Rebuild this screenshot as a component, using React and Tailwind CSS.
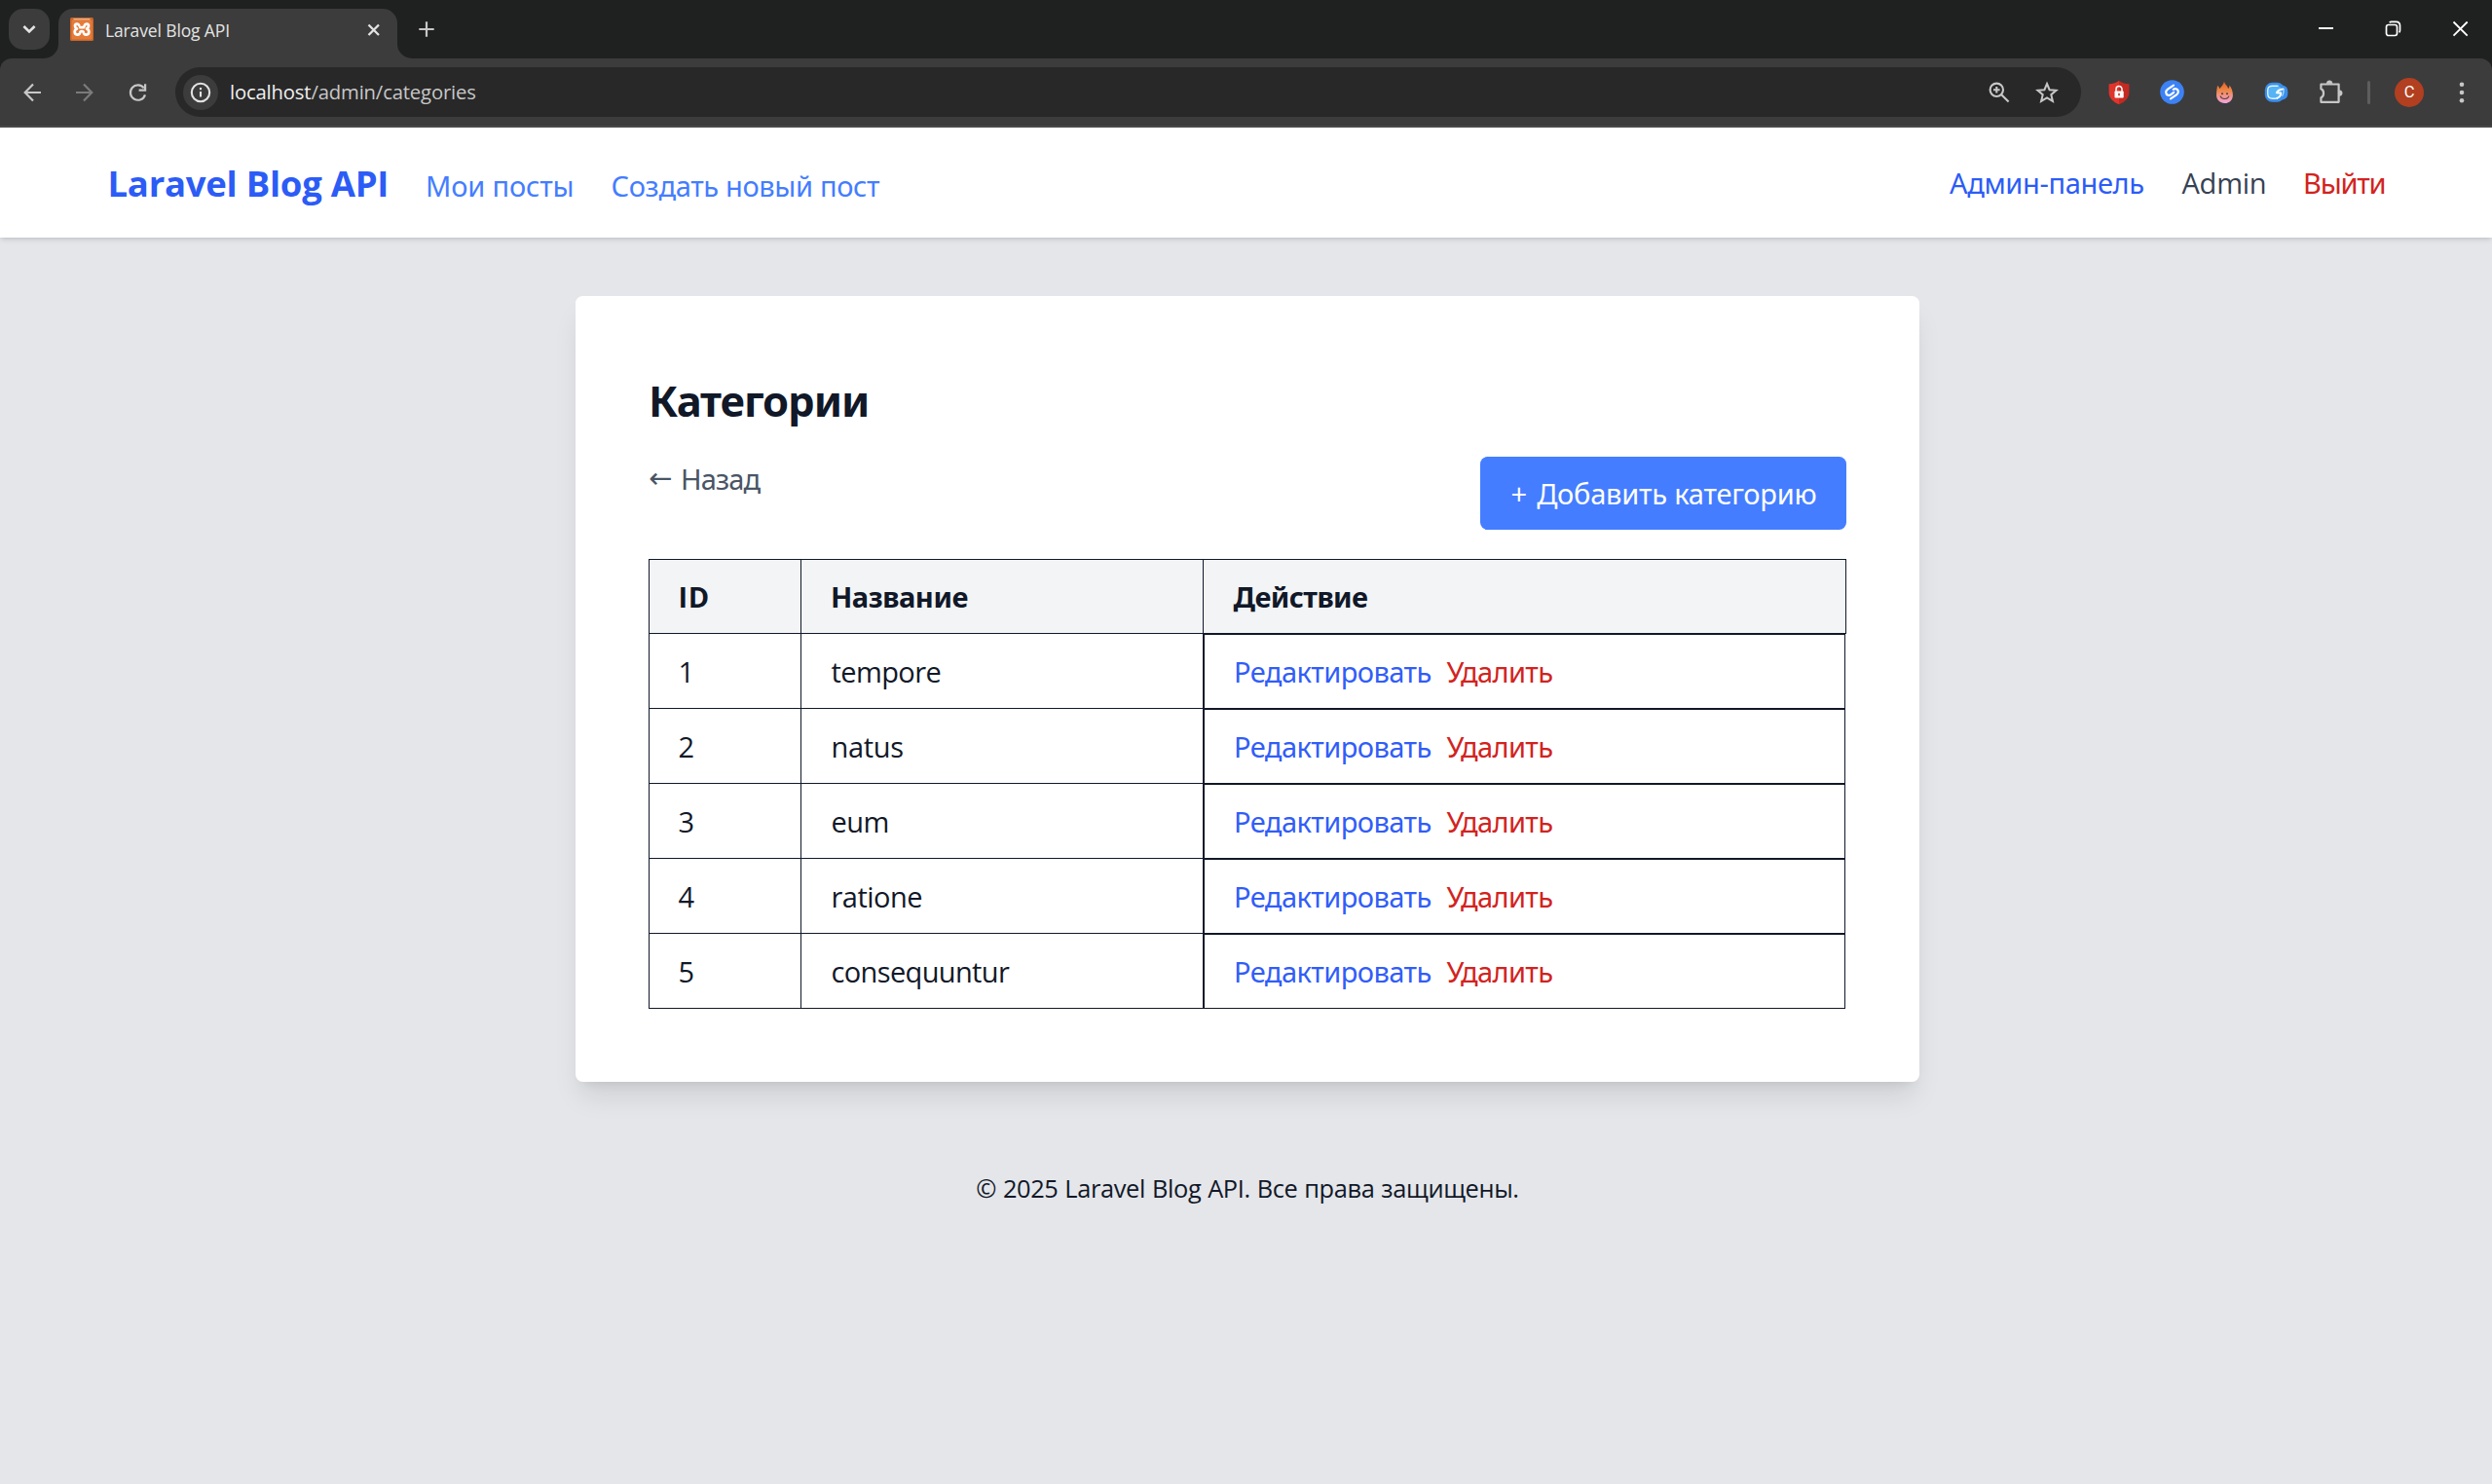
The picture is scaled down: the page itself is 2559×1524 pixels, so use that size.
import React from 'react';

const LATIN = "font-['Open_Sans','Noto_Sans',sans-serif]";
const CYR = "font-['Noto_Sans','Open_Sans',sans-serif]";

const rows = [
  { id: 1, name: 'tempore', track: 'tracking-[-0.6px]' },
  { id: 2, name: 'natus', track: 'tracking-[-0.3px]' },
  { id: 3, name: 'eum', track: 'tracking-[-0.5px]' },
  { id: 4, name: 'ratione', track: 'tracking-[-0.5px]' },
  { id: 5, name: 'consequuntur', track: 'tracking-[-0.64px]' },
];

function Favicon() {
  return (
    <svg width="24" height="24" viewBox="0 0 24 24">
      <rect width="24" height="24" rx="1.5" fill="#c9662a" />
      <rect x="1.5" y="2.5" width="21" height="20" rx="1" fill="#e57b38" />
      <path d="M3.5 1.8h17" stroke="#f5c3a2" strokeWidth="1.2" />
      <path
        d="M9.2 8.2c-.6-2.4-4.2-2-4.2.6 0 1.600 1 2.300 2 2.700-1.300.6-2.300 1.700-2.300 3.200 0 3.600 5 3.900 5.500.7.1-.9.800-1.300 1.800-1.300s1.700.4 1.800 1.300c.5 3.200 5.500 2.900 5.500-.7 0-1.500-1-2.600-2.300-3.200 1-.4 2-1.100 2-2.700 0-2.600-3.600-3-4.200-.6-.2.900-.5 1.500-.9 2h-3.700"
        fill="none" stroke="#fff" strokeWidth="2.700" strokeLinecap="round" strokeLinejoin="round"
      />
    </svg>
  );
}

function TabStrip() {
  return (
    <div className="relative flex h-[60px] items-start bg-[#1f2120]">
      <div className="mt-[9px] ml-[9px] flex h-[42px] w-[42px] items-center justify-center rounded-[15px] bg-[#3c3c3c]">
        <svg width="14" height="10" viewBox="0 0 14 10" fill="none" stroke="#e3e3e3" strokeWidth="2.600"><path d="M1.400 2 7 7.500 12.600 2" /></svg>
      </div>
      <div className="relative mt-[9px] ml-[9px] flex h-[51px] w-[348px] rounded-t-[15px] bg-[#3c3c3c]">
        <svg className="absolute bottom-0 -left-[15px]" width="15" height="15" viewBox="0 0 15 15"><path d="M15 0v15H0A15 15 0 0 0 15 0Z" fill="#3c3c3c" /></svg>
        <svg className="absolute -right-[15px] bottom-0" width="15" height="15" viewBox="0 0 15 15"><path d="M0 0v15h15A15 15 0 0 1 0 0Z" fill="#3c3c3c" /></svg>
        <div className="mt-[9px] ml-[12px] h-6 w-6"><Favicon /></div>
        <span className={`mt-[10px] ml-[12px] w-[269px] text-[17.500px] leading-6 tracking-[-0.13px] text-[#e3e3e3] ${LATIN}`}>Laravel Blog API</span>
        <svg className="mt-[14.500px]" width="14" height="14" viewBox="0 0 14 14" stroke="#e3e3e3" strokeWidth="2.300"><path d="m1.500 1.500 10.500 10.500M12 1.500 1.500 12" /></svg>
      </div>
      <svg className="mt-[22px] ml-[22px]" width="16" height="16" viewBox="0 0 16 16" stroke="#c7c7c7" strokeWidth="2.200"><path d="M8 .3v15.400M.3 8h15.400" /></svg>
      <div className="mr-[24px] ml-auto flex gap-[52px] pt-[21px] text-white">
        <svg width="17" height="17" viewBox="0 0 17 17" stroke="currentColor" strokeWidth="1.900"><path d="M1 8h15" /></svg>
        <svg width="17" height="17" viewBox="0 0 17 17" fill="none" stroke="currentColor" strokeWidth="1.700"><rect x="1.500" y="4.500" width="11" height="11" rx="2.200" /><path d="M4.700 2.200c.5-.6 1.100-.9 2-.9h4.800c2.300 0 4 1.700 4 4v5c0 .9-.3 1.500-.9 2" /></svg>
        <svg width="17" height="17" viewBox="0 0 17 17" fill="none" stroke="currentColor" strokeWidth="1.800"><path d="m1.500 1.500 14.200 14.200M15.700 1.500 1.500 15.700" /></svg>
      </div>
    </div>
  );
}

function Toolbar() {
  return (
    <div className="bg-[#1f2120]">
      <div className="flex h-[71px] items-center rounded-t-[12px] border-b-2 border-[#4a4a4a] bg-[#3c3c3c]">
        <svg className="ml-[24px]" width="18" height="20" viewBox="0 0 18 20" fill="none" stroke="#c7c7c7" strokeWidth="2.200"><path d="M18 10H2M10 1.600 1.700 10l8.300 8.400" /></svg>
        <svg className="ml-[36px]" width="18" height="20" viewBox="0 0 18 20" fill="none" stroke="#7b7b7b" strokeWidth="2.200"><path d="M0 10h16M8 1.600 16.300 10 8 18.400" /></svg>
        <svg className="ml-[36px]" width="19" height="20" viewBox="0 0 19 20" fill="none" stroke="#c7c7c7" strokeWidth="2.200"><path d="M17 12.300A7.700 7.700 0 1 1 15.800 5.400" /><path d="M17.100 1.200v6.500h-6.500" /></svg>
        <div className="ml-[29px] flex h-[51px] w-[1957px] items-center rounded-full bg-[#282828]">
          <div className="ml-[8px] flex h-9 w-9 items-center justify-center rounded-full bg-[#3c3c3c]">
            <svg width="22" height="22" viewBox="0 0 22 22" fill="none" stroke="#e3e3e3" strokeWidth="2.100"><circle cx="11" cy="11" r="9.200" /><path d="M11 10v5.600M11 6v2.300" /></svg>
          </div>
          <span className={`-mt-[1px] ml-[12px] text-[20.300px] leading-7 tracking-[-0.17px] text-[#c7c7c7] ${LATIN}`}><span className="text-[#f0f0f0]">localhost</span>/admin/categories</span>
          <svg className="mr-[26px] ml-auto" width="22" height="22" viewBox="0 0 22 22" fill="none" stroke="#c7c7c7" strokeWidth="2.100"><circle cx="8.300" cy="8.300" r="6.700" /><path d="m13 13 7.600 7.600M8.300 5v6.600M5 8.300h6.600" /></svg>
          <svg className="mr-[23px]" width="24" height="24" viewBox="0 0 24 24" fill="none" stroke="#c7c7c7" strokeWidth="2"><path d="m12 3 2.600 6.200 6.900.6-5.200 4.400 1.600 6.700-5.900-3.600-5.900 3.600 1.600-6.700-5.200-4.400 6.900-.6Z" /></svg>
        </div>

        <svg className="ml-[28px]" width="22" height="26" viewBox="0 0 22 26"><path d="M11 .8C8.600 3 4.500 4.300.6 4.300v9c0 5.500 4.500 9.600 10.400 12Z" fill="#e0352b" /><path d="M11 .8c2.400 2.200 6.500 3.500 10.400 3.500v9c0 5.500-4.500 9.600-10.400 12Z" fill="#c22a22" /><rect x="6.500" y="11.500" width="9.200" height="7" rx=".8" fill="#fff" /><path d="M8 12V9.500a3 3 0 0 1 6 0V12" fill="none" stroke="#fff" strokeWidth="1.500" /><path d="M11 13.700v2.600" stroke="#d0302a" strokeWidth="1.600" /></svg>
        <svg className="ml-[31px]" width="25" height="25" viewBox="0 0 25 25" fill="none" stroke="#fff" strokeWidth="2.200" strokeLinecap="round" strokeLinejoin="round"><circle cx="12.500" cy="12.500" r="12.300" fill="#3c82f6" stroke="none" /><path d="M14 5.700 8 9.600C5.300 11.500 5.800 15 8.300 15.800c1.200.3 2.100 0 3-.7l2.900-2.300" /><path d="m11 19.300 6-3.900c2.700-1.900 2.200-5.400-.3-6.200-1.200-.3-2.100 0-3 .7" /></svg>
        <svg className="ml-[32px]" width="19" height="24" viewBox="0 0 19 24"><defs><linearGradient id="flame" x1="0" y1="0" x2="0" y2="1"><stop offset="0" stopColor="#ea5a24" /><stop offset=".4" stopColor="#ee8644" /><stop offset="1" stopColor="#f2a6e0" /></linearGradient></defs><path d="M9 .5c.3 2.900 3.600 4.600 4 7.500 1.100-.6 1.500-1.900 1.400-3.500 2 2.500 3.500 6.200 3.500 10 0 5-3.300 8.500-8.300 8.500S1 19.600 1 14.600c0-3.400.6-6.800 1-9.600 1.300.7 1.900 1.800 2.300 3.300C6 6 8.500 3.900 9 .5Z" fill="url(#flame)" /><path d="M5 15.600c1.500 3.900 7.500 3.900 9 0" fill="none" stroke="#5a3a34" strokeWidth="1.100" /><circle cx="7" cy="13.300" r=".95" fill="#4a3030" /><circle cx="12" cy="13.300" r=".95" fill="#4a3030" /></svg>
        <svg className="ml-[31px]" width="25" height="22" viewBox="0 0 25 22" fill="none" strokeLinecap="round" strokeLinejoin="round"><rect x=".8" y=".8" width="20" height="20" rx="7.500" fill="#3b8fee" /><rect x="11" y="3.500" width="13.300" height="15" rx="6" fill="#3b8fee" /><rect x="5" y="4.500" width="13" height="12.500" rx="4" fill="#55b4f5" /><path d="M14 4.200H8.500C5.500 4.200 3.800 5.700 3.800 8.500v4c0 3 1.800 4.700 4.800 4.700h3" stroke="#dff3ff" strokeWidth="1.500" /><path d="M19.500 7.500c-3.200.2-5.600 1.500-6.700 3.700l4.500.3c-.2 2.100-1.500 4.500-4.300 5.500" stroke="#fff" strokeWidth="1.900" /><path d="M20 7.500c.3 2.600-.1 4.800-1.200 6.700" stroke="#a5dcfb" strokeWidth="1.300" /></svg>
        <svg className="ml-[31px]" width="25" height="25" viewBox="0 0 25 25"><path d="M2.400 4.500h18.200v18.300H2.400v-4.600c3.500-1.300 3.500-7.600 0-9Z" fill="none" stroke="#c7c7c7" strokeWidth="2.200" strokeLinejoin="round" /><path d="M8.200 3.700a2.900 2.900 0 0 1 5.800 0ZM21.300 10.700a2.900 2.900 0 0 1 0 5.800Z" fill="#c7c7c7" stroke="#c7c7c7" strokeWidth=".6" /></svg>
        <div className="ml-[25px] h-6 w-[3px] rounded-full bg-[#5e5e5e]" />
        <div className="ml-[25px] flex h-[30px] w-[30px] items-center justify-center rounded-full bg-[#b23f20] pt-[1px] font-[Roboto,sans-serif] text-[16.500px] leading-none text-white">C</div>
        <svg className="ml-[36px]" width="6" height="22" viewBox="0 0 6 22" fill="#c7c7c7"><circle cx="3" cy="2.700" r="2.300" /><circle cx="3" cy="11" r="2.300" /><circle cx="3" cy="19.300" r="2.300" /></svg>
      </div>
    </div>
  );
}

function SiteHeader() {
  return (
    <header className={`relative flex h-[113px] items-center justify-between bg-white px-[109.500px] text-[29px] leading-[45px] shadow-[0_2px_6px_rgba(0,0,0,0.1),0_2px_4px_-2px_rgba(0,0,0,0.12)] ${CYR}`}>
      <div className="flex items-center whitespace-nowrap">
        <a className={`mt-[2px] w-[327px] pl-[1px] text-[36.500px] font-bold tracking-[-0.26px] text-[#2c5cf6] ${LATIN}`}>Laravel Blog API</a>
        <a className="mt-[6px] w-[190.500px] pl-[0.500px] tracking-[-0.13px] text-[#447dff]">Мои посты</a>
        <a className="mt-[6px] pl-[0.500px] tracking-[-0.34px] text-[#447dff]">Создать новый пост</a>
      </div>
      <div className="flex items-center whitespace-nowrap">
        <a className="w-[238.500px] tracking-[-0.35px] text-[#2c5cf6]">Админ-панель</a>
        <span className={`w-[124.500px] tracking-[-0.22px] text-[#364153] ${LATIN}`}>Admin</span>
        <a className="w-[84.500px] tracking-[-1.200px] text-[#d22320]">Выйти</a>
      </div>
    </header>
  );
}

function CategoryTable() {
  return (
    <div className="w-[1230px] text-[29px] leading-[45px]">
      <div className="grid h-[77px] grid-cols-[156px_413px_661px] border-y border-[#111828] bg-[#f3f4f6] font-bold">
        <div className={`flex items-center border-l border-[#111828] pl-[29.500px] tracking-[0.600px] ${LATIN}`}>ID</div>
        <div className="flex items-center border-l border-[#111828] pl-[30px] tracking-[-0.46px]">Название</div>
        <div className="flex items-center border-x border-[#111828] pl-[30.500px] tracking-[-0.59px]">Действие</div>
      </div>
      {rows.map((r) => (
        <div key={r.id} className="grid h-[77px] grid-cols-[156px_413px_660px]">
          <div className={`flex items-center border-b border-l border-[#111828] pl-[29.500px] ${LATIN}`}>{r.id}</div>
          <div className={`flex items-center border-b border-l border-[#111828] pl-[30.500px] ${LATIN} ${r.track}`}>{r.name}</div>
          <div className="border-l border-[#111828]">
            <div className="flex h-[77px] items-center border border-[#111828] pl-[30px]">
              <a className="w-[218.500px] tracking-[-0.55px] text-[#315df8]">Редактировать</a>
              <a className="tracking-[-0.57px] text-[#d22320]">Удалить</a>
            </div>
          </div>
        </div>
      ))}
    </div>
  );
}

export default function App() {
  return (
    <div className={`flex h-[1524px] w-[2559px] flex-col overflow-hidden bg-[#e5e6ea] text-[#111828] ${CYR}`}>
      <TabStrip />
      <Toolbar />
      <SiteHeader />
      <main className="mt-[60px] ml-[591px] h-[807px] w-[1380px] rounded-[7.500px] bg-white p-[75px] shadow-[0_19px_28px_-5.600px_rgba(0,0,0,0.1),0_7.500px_11px_-7.500px_rgba(0,0,0,0.1)]">
        <h1 className="h-16 text-[43.500px] leading-[64px] font-bold tracking-[-1.050px]">Категории</h1>
        <div className="mt-[26px] mb-[30px] flex h-[75px] items-start justify-between">
          <a className="flex text-[29px] leading-[45px] tracking-[-0.86px] text-[#4a5565]"><span className="w-[33px] font-['DejaVu_Sans',sans-serif] text-[29px]">←</span>Назад</a>
          <button className="h-[75px] w-[376px] rounded-[7.500px] bg-[#447dff] pl-[1px] text-center text-[29px] leading-[75px] tracking-[-0.220px] whitespace-nowrap text-white"><span className="mr-[3px]">+</span> Добавить категорию</button>
        </div>
        <CategoryTable />
      </main>
      <footer className={`mt-[87px] pl-[3px] text-center text-[25.400px] leading-[44px] tracking-[-0.36px] [word-spacing:0.600px] ${LATIN}`}>© 2025 Laravel Blog API. Все права защищены.</footer>
    </div>
  );
}
